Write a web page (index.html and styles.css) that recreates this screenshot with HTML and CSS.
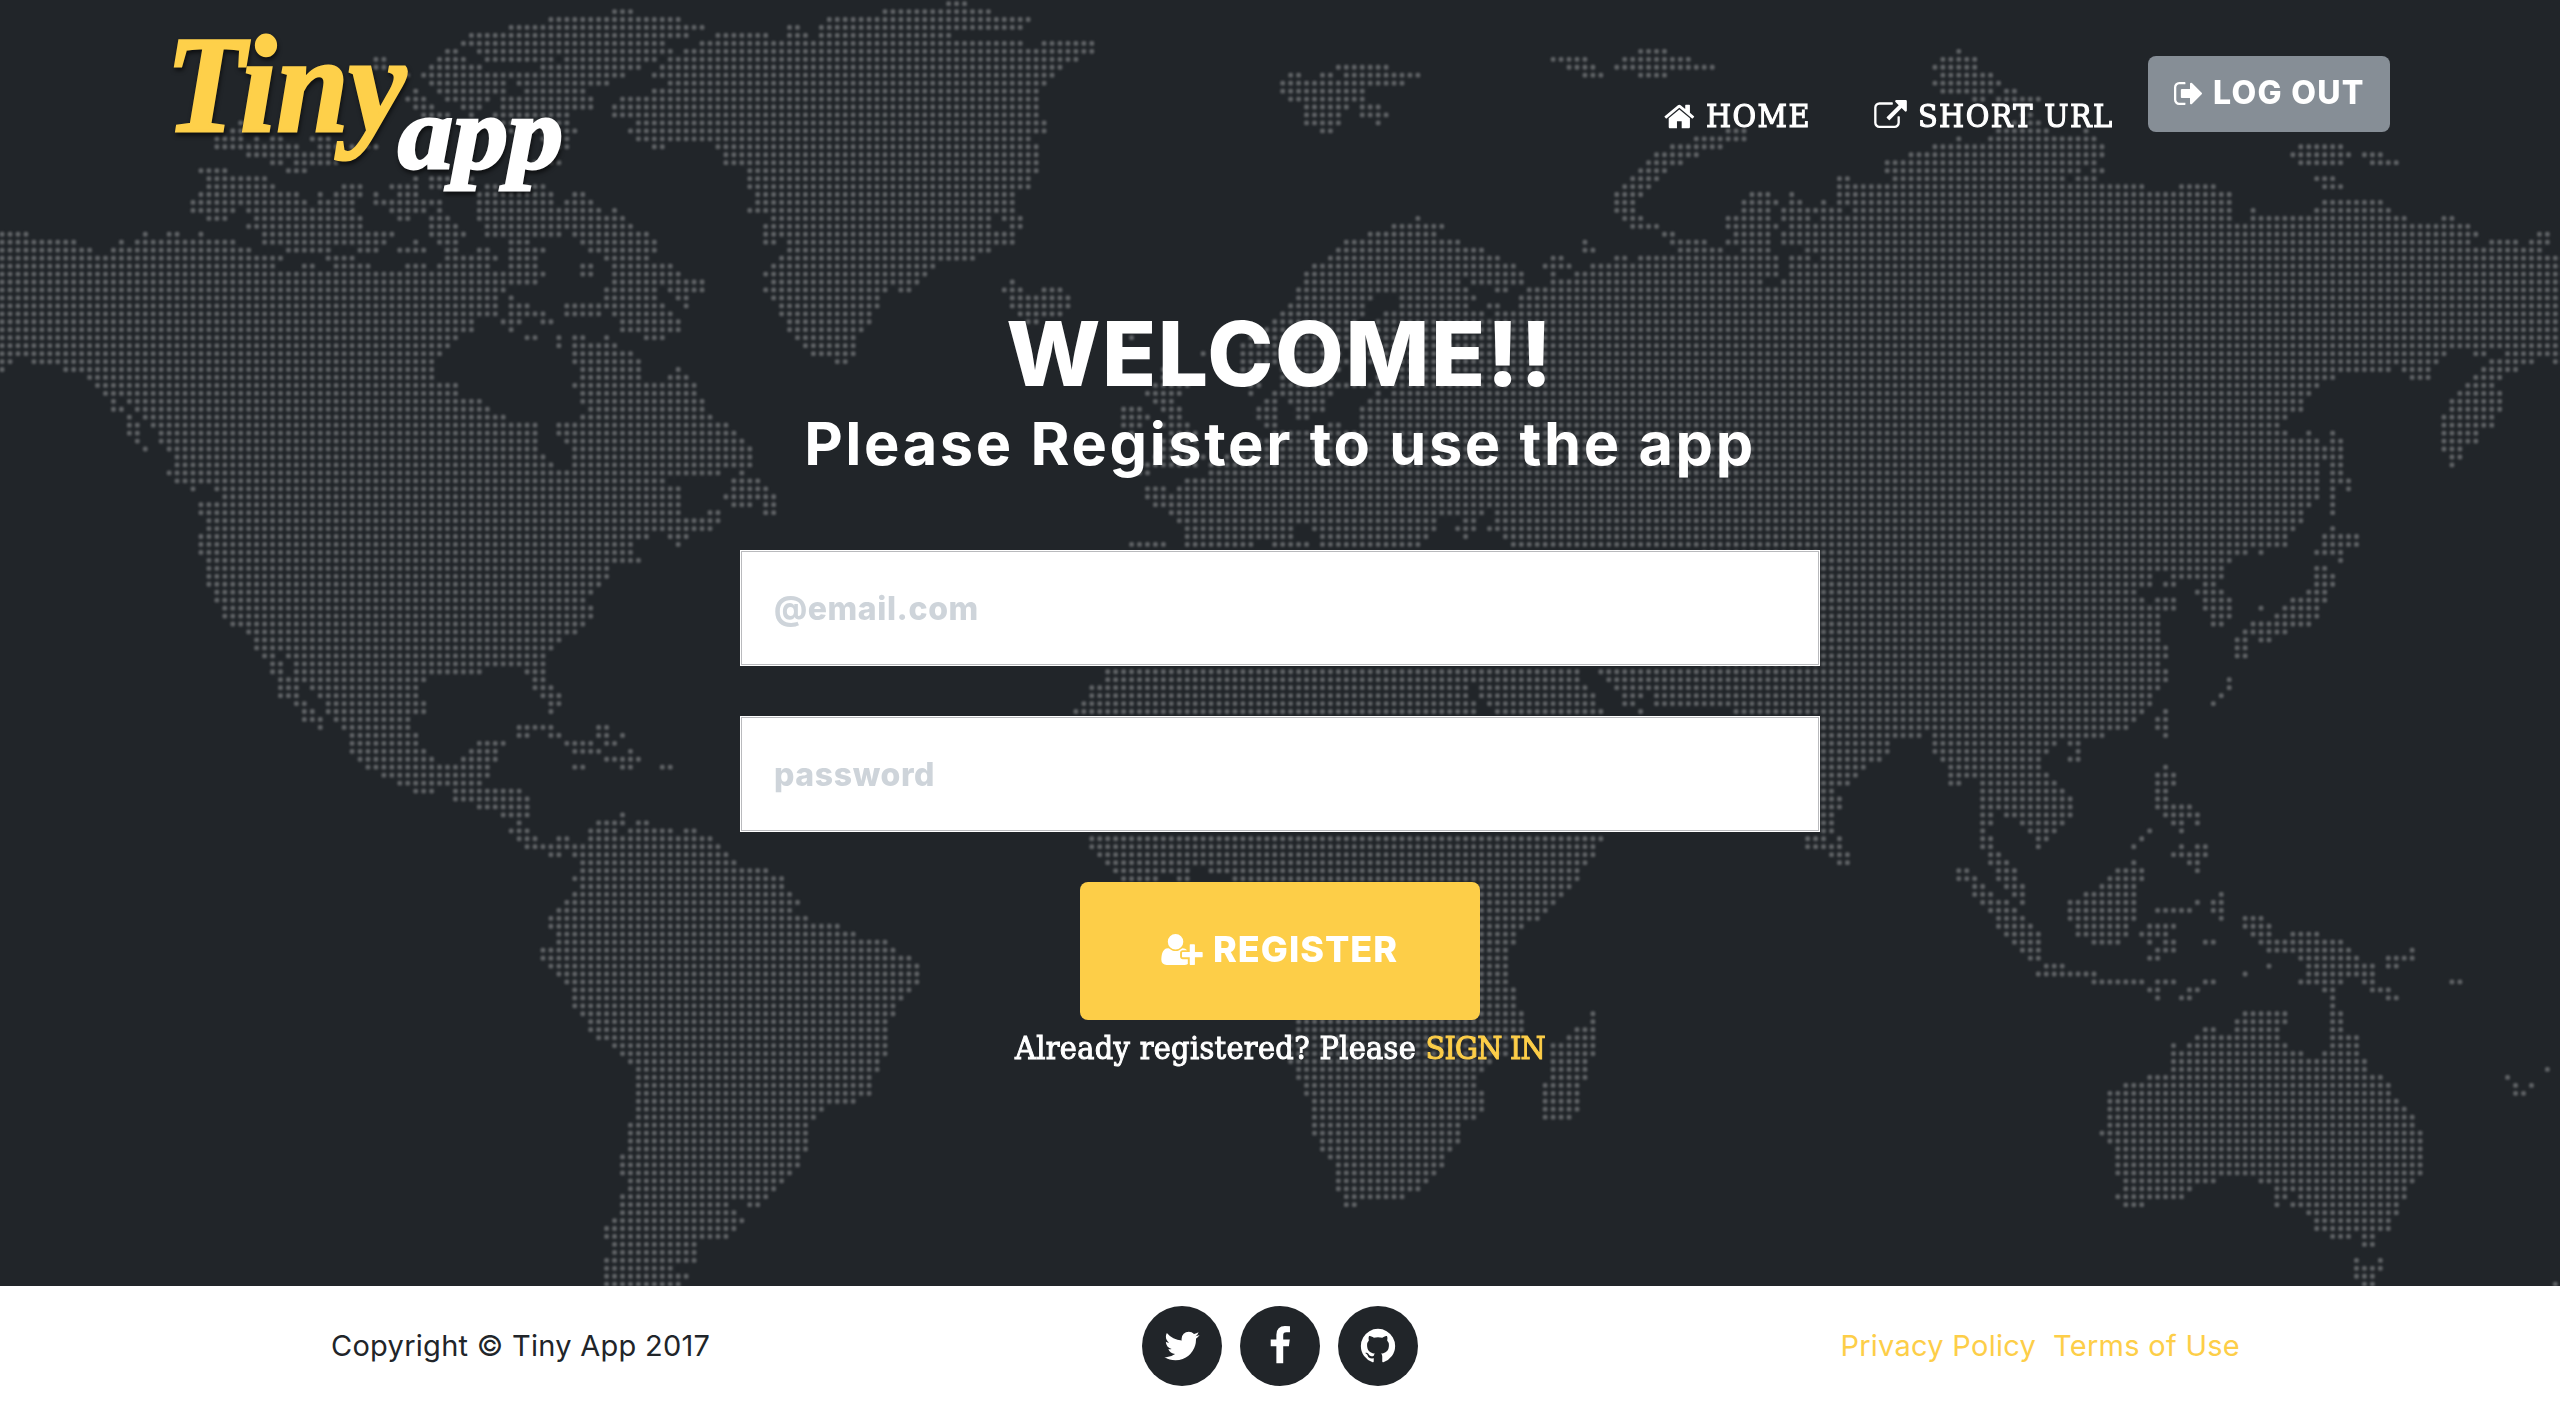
FILE: index.html
```html
<!DOCTYPE html>
<html lang="en">
<head>
<meta charset="utf-8">
<title>Tiny App</title>
<link rel="stylesheet" href="styles.css">
</head>
<body>
<main class="hero">
  <canvas class="world" width="2560" height="1286"></canvas>
  <header class="navbar">
    <svg class="logo" viewBox="0 0 410 190" role="img" aria-label="Tiny app">
      <text class="logo-tiny" x="-2" y="116" textLength="240" lengthAdjust="spacingAndGlyphs">Tiny</text>
      <text class="logo-app" x="230" y="153" textLength="165" lengthAdjust="spacingAndGlyphs">app</text>
    </svg>
    <nav class="links">
      <a class="link link-home"><svg class="icon-home" viewBox="0 0 1792 1792"><path d="M1408 992v480q0 26-19 45t-45 19h-384v-384h-256v384h-384q-26 0-45-19t-19-45v-480q0-1 .5-3t.5-3l575-474 575 474q1 2 1 6zm223-69l-62 74q-8 9-21 11h-3q-13 0-21-7l-692-577-692 577q-12 8-24 7-13-2-21-11l-62-74q-8-10-7-23.5t11-21.5l719-599q32-26 76-26t76 26l244 204v-195q0-14 9-23t23-9h192q14 0 23 9t9 23v408l219 182q10 8 11 21.5t-7 23.5z"/></svg><span class="t-home">HOME</span></a>
      <a class="link link-short"><svg class="icon-ext" viewBox="0 0 1792 1536"><path d="M1408 928v320q0 119-84.5 203.5t-203.5 84.500h-832q-119 0-203.500-84.500t-84.500-203.500v-832q0-119 84.500-203.500t203.500-84.500h704q14 0 23 9t9 23v64q0 14-9 23t-23 9h-704q-66 0-113 47t-47 113v832q0 66 47 113t113 47h832q66 0 113-47t47-113v-320q0-14 9-23t23-9h64q14 0 23 9t9 23zm384-864v512q0 26-19 45t-45 19-45-19l-176-176-652 652q-10 10-23 10t-23-10l-114-114q-10-10-10-23t10-23l652-652-176-176q-19-19-19-45t19-45 45-19h512q26 0 45 19t19 45z"/></svg><span class="t-short">SHORT URL</span></a>
      <button class="btn-logout"><svg class="icon-out" viewBox="64 256 1568 1280"><path d="M704 1440q0 4 1 20t.5 26.500-3 23.500-10 19.500-20.500 6.500h-320q-119 0-203.500-84.500t-84.500-203.500v-704q0-119 84.500-203.500t203.500-84.500h320q13 0 22.500 9.500t9.500 22.500q0 4 1 20t.5 26.500-3 23.500-10 19.500-20.500 6.500h-320q-66 0-113 47t-47 113v704q0 66 47 113t113 47h312l11.500 1 11.500 3 8 5.500 7 9 2 13.500zm928-544q0 26-19 45l-544 544q-19 19-45 19t-45-19-19-45v-288h-448q-26 0-45-19t-19-45v-384q0-26 19-45t45-19h448v-288q0-26 19-45t45-19 45 19l544 544q19 19 19 45z"/></svg><span>LOG OUT</span></button>
    </nav>
  </header>
  <section class="intro">
    <h1 class="title">WELCOME!!</h1>
    <h2 class="subtitle">Please Register to use the app</h2>
    <form class="form">
      <input class="field field-email" type="text" placeholder="@email.com">
      <input class="field field-password" type="text" placeholder="password">
      <button class="btn-register" type="button"><svg class="icon-user" viewBox="0 128 2048 1536"><path d="M704 896q-159 0-271.500-112.500t-112.500-271.500 112.500-271.500 271.500-112.500 271.500 112.500 112.500 271.500-112.500 271.500-271.500 112.500zm960 128h352q13 0 22.500 9.500t9.500 22.500v192q0 13-9.500 22.500t-22.500 9.500h-352v352q0 13-9.500 22.500t-22.500 9.500h-192q-13 0-22.500-9.500t-9.500-22.500v-352h-352q-13 0-22.500-9.500t-9.500-22.500v-192q0-13 9.500-22.500t22.500-9.500h352v-352q0-13 9.500-22.500t22.500-9.500h192q13 0 22.500 9.500t9.500 22.500v352zm-736 224q0 52 38 90t90 38h256v238q-68 50-171 50h-874q-121 0-194-69t-73-190q0-53 3.500-103.500t14-109 26.500-108.500 43-97.500 62-81 85.500-53.500 111.500-20q19 0 39 17 79 61 154.500 91.500t164.500 30.500 164.500-30.500 154.500-91.500q20-17 39-17 132 0 217 96h-223q-52 0-90 38t-38 90v192z"/></svg><span>REGISTER</span></button>
    </form>
    <p class="signin">Already registered? Please <a class="signin-link">SIGN IN</a></p>
  </section>
</main>
<footer class="footer">
  <div class="copyright">Copyright © Tiny App 2017</div>
  <div class="social">
    <a class="bubble"><svg viewBox="0 0 1792 1792"><path d="M1684 408q-67 98-162 167 1 14 1 42 0 130-38 259.500t-115.500 248.500-184.500 210.500-258 146-323 54.500q-271 0-496-145 35 4 78 4 225 0 401-138-105-2-188-64.500t-114-159.500q33 5 61 5 43 0 85-11-112-23-185.500-111.500t-73.500-205.500v-4q68 38 146 41-66-44-105-115t-39-154q0-88 44-163 121 149 294.500 238.500t371.500 99.500q-8-38-8-74 0-134 94.500-228.500t228.500-94.500q140 0 236 102 109-21 205-78-37 115-142 178 93-10 186-50z"/></svg></a>
    <a class="bubble"><svg viewBox="0 0 1792 1792"><path d="M1343 12v264h-157q-86 0-116 36t-30 108v189h293l-39 296h-254v759h-306v-759h-255v-296h255v-218q0-186 104-288.500t277-102.500q147 0 228 12z"/></svg></a>
    <a class="bubble"><svg viewBox="0 0 1792 1792"><path d="M896 128q209 0 385.500 103t279.500 279.500 103 385.500q0 251-146.500 451.500t-378.500 277.500q-27 5-40-7t-13-30q0-3 .5-76.500t.5-134.500q0-97-52-142 57-6 102.500-18t94-39 81-66.500 53-105 20.500-150.500q0-119-79-206 37-91-8-204-28-9-81 11t-92 44l-38 24q-93-26-192-26t-192 26q-16-11-42.500-27t-83.500-38.500-85-13.500q-45 113-8 204-79 87-79 206 0 85 20.500 150t52.500 105 80.500 67 94 39 102.500 18q-39 36-49 103-21 10-45 15t-57 5-65.500-21.500-55.500-62.500q-19-32-48.500-52t-49.500-24l-20-3q-21 0-29 4.500t-5 11.500 9 14 13 12l7 5q22 10 43.500 38t31.500 51l10 23q13 38 44 61.500t67 30 69.500 7 55.500-3.500l23-4q0 38 .5 88.500t.5 54.500q0 18-13 30t-40 7q-232-77-378.500-277.500t-146.500-451.500q0-209 103-385.500t279.500-279.500 385.500-103z"/></svg></a>
  </div>
  <div class="legal"><a>Privacy Policy</a><a>Terms of Use</a></div>
</footer>
<script src="map.js"></script>
</body>
</html>
```
FILE: styles.css
```css
* { box-sizing: border-box; }
body { margin: 0; background: #fff; font-family: Inter, "Open Sans", sans-serif; color: #212529; }
svg { fill: currentColor; flex: none; }
.hero { position: relative; height: 1286px; background: #212529; color: #fff; overflow: hidden; }
.world { position: absolute; inset: 0; display: block; }
.navbar { position: relative; display: flex; justify-content: space-between; align-items: flex-start; height: 300px; padding: 15px 170px 0 168px; }
.logo { width: 410px; height: 190px; overflow: visible; font-family: "Liberation Serif", serif; font-style: italic; font-weight: 700; filter: drop-shadow(1px 3px 2px rgba(0,0,0,.6)); }
.logo-tiny { font-size: 138px; fill: #fed04a; stroke: #fed04a; stroke-width: 3px; }
.logo-app { font-size: 104px; fill: #fff; stroke: #fff; stroke-width: 3px; }
.links { display: flex; align-items: flex-start; padding-top: 41px; }
.link { display: flex; align-items: center; height: 40px; margin-top: 40px; font-family: "DejaVu Serif Condensed", "DejaVu Serif", serif; font-size: 32px; line-height: 40px; white-space: nowrap; -webkit-text-stroke: 1.1px #fff; }
.link svg { -webkit-text-stroke: 0; }
.link-home { width: 210px; }
.link-short { width: 274px; }
.icon-home { width: 33px; height: 33px; margin: 0 9px 0 0; }
.icon-ext { width: 33px; height: 28px; margin: -4px 11px 0 0; }
.t-home { letter-spacing: 1.4px; }
.t-short { letter-spacing: 1.4px; }
.btn-logout { display: flex; align-items: center; width: 242px; height: 76px; padding: 0 0 2px 26px; border: 0; border-radius: 8px; background: #868e96; color: #fff; font: 800 32px/40px Inter, sans-serif; letter-spacing: 1.3px; white-space: nowrap; }
.icon-out { width: 28px; height: 23px; margin-right: 11px; }
.intro { position: relative; display: flex; flex-direction: column; align-items: center; }
.title { margin: 0; height: 110px; font-size: 89px; line-height: 108px; font-weight: 800; letter-spacing: 1.6px; }
.subtitle { margin: 0; height: 80px; font-size: 59.5px; line-height: 66px; font-weight: 700; letter-spacing: 2.6px; white-space: nowrap; }
.form { display: flex; flex-direction: column; align-items: center; margin-top: 60px; }
.field { width: 1080px; height: 116px; margin: 0 0 50px; padding: 0 33px; border: 1px solid #fff; box-shadow: inset 0 0 0 1px #b9babd; border-radius: 0; background: #fff; font: 800 32px Inter, sans-serif; letter-spacing: .6px; }
.field::placeholder { color: #ced4da; opacity: 1; }
.btn-register { display: flex; align-items: center; width: 400px; height: 138px; padding: 0 0 4px 81px; border: 0; border-radius: 8px; background: #fdce48; color: #fff; font: 800 36px/40px Inter, sans-serif; letter-spacing: 1px; white-space: nowrap; }
.icon-user { width: 42px; height: 31px; margin-right: 10px; }
.signin { margin: 4px 0 0; font-family: "DejaVu Serif Condensed", "DejaVu Serif", serif; font-size: 32px; line-height: 48px; letter-spacing: .35px; white-space: nowrap; -webkit-text-stroke: 1px currentColor; }
.signin-link { color: #fdce48; letter-spacing: -.8px; }
.footer { display: grid; grid-template-columns: 1fr auto 1fr; align-items: center; height: 120px; font-size: 29px; line-height: 40px; letter-spacing: .27px; background: #fff; }
.copyright { padding-left: 331px; white-space: nowrap; }
.social { display: flex; gap: 18px; }
.bubble { display: flex; align-items: center; justify-content: center; width: 80px; height: 80px; border-radius: 50%; background: #212529; color: #fff; }
.bubble svg { width: 40px; height: 40px; }
.legal { display: flex; justify-content: flex-end; gap: 17px; padding-right: 320px; color: #fdce48; white-space: nowrap; }
```
FILE: map.js
```js
// Dotted world map. Each sheet has its own origin and scale; rows are
// "y x0 x1 [x0 x1 ...]" runs of land, outline is a closed land polygon.
const PITCH = 7.954, X0 = 2.1, Y0 = 3.6;
const sheets = [
  { ox: 0, oy: 0, sx: 1.8233, sy: 2.24,
    outline: "-10,516 54,516 54,534 142,534 142,552 170,552 172,570 200,570 202,552 215,552 215,534 228,534 228,552 245,552 245,534 258,534 258,516 272,516 272,534 302,534 302,516 330,516 330,534 360,534 360,516 374,516 374,534 432,534 432,552 460,552 462,570 518,570 518,588 506,588 506,606 548,606 548,588 578,588 578,606 604,606 604,588 678,588 678,606 736,606 736,588 782,588 782,606 796,606 796,588 808,588 808,552 832,552 832,570 866,570 866,552 896,552 896,570 910,570 910,588 896,588 896,606 924,606 924,534 968,534 968,552 996,552 996,568 982,570 982,606 996,606 996,622 982,624 982,640 924,640 924,658 910,658 910,712 868,712 868,748 838,748 838,766 824,766 824,784 808,784 808,802 794,802 794,855 838,855 838,890 880,890 880,908 896,908 896,926 924,926 924,944 982,944 982,1014 996,1014 996,1032 1010,1032 1010,1050 1040,1050 1040,1000 1028,1000 1028,980 1014,980 1014,944 1056,944 1056,926 1072,926 1072,908 1056,908 1056,872 1044,872 1044,855 1058,836 1058,816 1044,816 1044,750 1070,750 1070,766 1098,766 1098,750 1112,750 1112,766 1128,766 1128,784 1158,784 1158,800 1170,800 1170,855 1214,855 1214,836 1230,836 1230,820 1244,820 1244,836 1258,836 1258,855 1272,855 1272,890 1288,890 1288,926 1300,926 1300,944 1330,944 1330,962 1345,962 1345,980 1360,980 1360,998 1374,998 1374,1050 1316,1052 1316,1068 1216,1068 1216,1086 1244,1086 1244,1158 1288,1158 1288,1140 1316,1140 1316,1176 1302,1176 1302,1192 1258,1192 1258,1210 1244,1210 1244,1228 1230,1228 1230,1210 1214,1210 1214,1194 1186,1194 1186,1210 1158,1210 1158,1246 1172,1246 1172,1264 1114,1264 1114,1300 1100,1300 1100,1318 1086,1318 1086,1334 1070,1334 1070,1352 1084,1352 1084,1388 1070,1388 1070,1406 1056,1406 1056,1424 1026,1424 1026,1442 1010,1442 1010,1460 996,1460 996,1514 956,1514 956,1496 880,1496 880,1514 535,1514 535,1478 518,1478 518,1462 500,1462 500,1478 476,1478 476,1460 462,1460 462,1426 448,1424 448,1406 418,1406 418,1388 404,1388 404,1352 390,1352 390,1318 375,1318 375,1246 360,1246 360,1194 375,1194 375,1158 360,1158 360,1122 404,1122 404,1104 390,1104 375,1086 360,1086 360,1104 346,1104 346,1086 317,1086 317,1068 303,1068 303,1050 317,1050 317,1014 303,1014 303,998 288,998 288,962 273,962 273,944 244,926 244,908 230,908 230,890 186,890 186,872 172,872 172,855 158,855 158,836 114,836 114,818 56,818 56,802 28,802 28,818 10,818 10,836 -10,836",
    rows: `26 1115 1156;44 1000 1243 1506 1580;62 927 1286 1435 1460 1492 1580;79 855 1258 1302 1402 1435 1475 1492 1580
97 840 1215 1273 1580;115 812 838 868 1230 1244 1580;133 680 706 795 852 882 1012 1026 1200 1214 1580;151 680 706 780 880 985 1172 1200 1580
169 724 750 766 1142 1186 1580;187 780 925 940 1114 1214 1580;205 752 766 795 925 955 1070 1186 1580;222 738 780 810 895 910 1084 1128 1580
240 752 795 840 880 910 1084 1114 1580;258 768 822 855 866 895 1040 1114 1580;276 435 450 855 866 900 1040 1158 1580;294 418 445 895 1055 1142 1580
312 390 445 460 475 490 518 562 605 985 1040 1158 1580;330 390 547 576 620 640 690 1000 1040 1186 1214 1302 1580;347 447 605 1316 1580
365 490 518 533 620 970 1020 1316 1580;383 360 415 520 562 1360 1580;400 375 490 752 766 782 866 1360 1580;418 375 504 620 663 710 770 780 866 880 996 1360 1580
436 360 547 578 592 606 663 680 692 724 766 868 1010 1040 1070 1374 1580;454 346 562 578 650 680 810 868 1012 1026 1084 1374 1580
472 346 430 447 650 710 780 795 808 868 1100 1114 1128 1360 1580;490 375 415 462 663 724 750 780 824 868 1142 1402 1580
507 447 663 780 838 882 1158 1388 1580;525 477 720 780 852 882 1026 1040 1186 1388 1580;543 477 706 752 766 795 838 1056 1200 1388 1416 1430 1580
561 520 605 650 692 724 780 1070 1200 1430 1580;579 592 648 1100 1186 1416 1580;597 1056 1084 1114 1230 1402 1580;615 1056 1084 1114 1244 1388 1580
633 1114 1286 1402 1580;650 1100 1200 1214 1286 1388 1580;668 924 940 1100 1200 1230 1258 1402 1580;686 924 968 1026 1214 1244 1258 1416 1580
704 924 996 1026 1098 1114 1230 1416 1580;722 910 955 982 1010 1128 1244 1430 1580;740 924 940 1128 1244 1430 1580;758 955 982 1014 1024 1172 1214 1445 1562;776 1014 1024 1460 1562
793 1478 1562;811 1520 1550;900 200 214;918 200 228;936 228 244 258 272;954 228 258;972 228 258;990 244 258;1007 258 272
1060 1345 1360;1078 1330 1388;1095 1330 1402;1113 1316 1416;1131 1330 1374 1388 1416;1149 1388 1416
1488 490 516;1506 490 516;1524 506 547 550 780 970 996;1541 506 547 562 765 970 1010;1559 506 547 576 765 985 1024` },
  { ox: 860, oy: 0, sx: 1.8233, sy: 2.8,
    rows: `8 155 198;32 40 240;55 -5 313;77 -5 298;100 -5 168;122 -5 298 330 428;145 -5 428 1418 1472;167 -5 400 1258 1330 1388 1516
189 -5 370 868 966 1288 1342 1375 1560;211 -5 355 780 806 838 864 880 1024 1316 1358 1418 1472;233 -5 342 766 996;256 -5 327 766 922;278 -5 327 780 922
300 -5 327 810 894 910 952;322 -5 327 810 880 910 966;345 -5 342 810 880 938 952;367 -5 342 838 864;390 -5 313 1520 1580;412 -5 327 1476 1580
434 -5 327 1446 1532;456 -5 327 1432 1502;479 -5 327 1418 1472;501 -5 313 1402 1458;523 -5 313 1388 1444;545 -5 284 1374 1430;568 -5 284 1374 1415
590 -5 284 1374 1415;612 -5 240 258 298 1012 1024 1388 1430;634 -5 240 272 298 966 1068 1402 1458;657 -5 284 924 1054 1460 1488
679 -5 284 880 1096 1316 1328 1476 1546;701 -5 240 866 1140 1316 1342 1490 1580;724 -5 211 852 1170 1258 1285 1374 1400 1418 1580
746 -5 140 824 1198 1244 1300 1330 1580;768 -5 124 810 1212 1258 1270 1302 1580;790 -5 110 272 284 810 1096 1112 1212 1258 1580
813 -5 52 68 96 258 298 330 370 795 1112 1156 1184 1214 1580;835 -5 38 272 386 795 938 982 1126 1200 1580;857 -5 38 272 386 780 922 982 1112 1142 1170 1200 1580
880 -5 22 286 370 766 922 955 1142 1156 1580;902 -5 22 300 327 752 908 938 1580;926 -5 8 738 910 925 1580;948 486 500 700 900 925 1580
970 695 895 910 1580;992 620 630 695 880 895 1580;1014 695 890 920 1580;1036 548 570 695 740 765 880 950 1580;1058 540 600 695 740 765 870 940 1580
1080 530 600 700 730 765 1580;1102 518 590 708 720 750 864 938 952 966 1580;1124 533 575 738 764 780 852 922 1580;1147 476 516 548 590 722 764 795 852 910 1580
1169 476 530 560 590 722 764 795 822 910 1580;1191 476 516 548 605 735 764 850 880 910 1580;1213 490 505 560 620 750 1580;1236 548 620 720 1580
1258 540 620 690 1580;1280 530 630 665 1580;1302 520 620 640 1580;1325 505 530 635 1580;1347 590 1580;1370 518 562 576 1580;1392 518 1580;1414 533 1580
1437 562 1140 1156 1580;1459 576 1054 1098 1126 1156 1580;1481 590 795 822 1054 1084 1126 1142 1580;1504 590 795 838 1038 1098 1112 1170 1580
1526 490 560 590 720 750 822 838 1024 1186 1580` },
  { ox: 1700, oy: 0, sx: 1.8233, sy: 2.24,
    outline: "-10,642 1580,642 1580,784 -10,784",
    rows: `115 466 478;133 437 507;151 0 28 422 507;169 437 536;187 422 550;205 437 536 550 580;222 495 525 540 624;240 560 610;258 575 610;276 560 624
294 45 88 540 636 697 710;312 0 88 466 478 525 725;330 0 44 422 740 1088 1174;347 380 740 1074 1188 1204 1246;365 336 725 1088 1174 1220 1276
383 336 696 710 740;400 248 274 348 668 682 725 1118 1160;418 248 812 872 942 1132 1174;436 88 130 160 174 248 972;454 74 145 160 188 220 232 248 972 1132 1246
472 74 130 147 260 276 972 1002 1016 1118 1260;490 45 130 147 204 220 972 1002 1290 1350 1378;507 45 145 160 1406;525 60 130 147 1420 1524 1552
543 0 14 45 130 147 1406 1436 1494 1510 1552;561 0 44 74 130 190 1538;579 0 145 160 204 220 1580;597 0 145 160 1580;615 0 145 160 1580;633 0 116 147 1580
793 0 1362 1406 1436 1465 1580;811 0 1348 1436 1524 1552 1580;829 0 1262 1276 1334 1420 1494;847 0 1160 1290 1334 1406 1465;865 0 1130 1392 1450
883 0 1116 1378 1465;900 0 1102 1364 1465;918 0 1102 1364 1465;936 0 1072 1350 1450;954 0 1058 1350 1450;972 0 1072 1102 1116 1147 1160 1350 1420
990 0 1130 1147 1174 1350 1420;1007 0 1174 1350 1392;1025 0 1130 1132 1174 1364 1392;1042 0 1130 1147 1174 1364 1378;1060 0 1130 1147 1174
1078 0 1130 1147 1188;1095 0 1130 1147 1160 1174 1188;1113 0 1130 1147 1160;1131 0 1116 1147 1160;1149 0 1102 1147 1160;1167 0 1102;1185 0 1088 1147 1160
1203 0 1072 1132 1204;1220 0 1072 1132 1204;1238 0 1000 1016 1028 1118 1174;1256 0 972 1160 1174;1274 0 957 1118 1145;1292 0 825 857 957 1118 1160
1310 0 825 842 870 914 942 1118 1160;1327 0 800 900 957 1102 1145;1345 0 812 828 870 914 972 1074 1145;1363 0 870 914 972 1016 1028 1058 1130
1381 0 842 928 972 1045 1130;1399 0 842 928 957 1000 1116;1417 0 842 986 1072;1434 0 842 972 1000 1016 1045;1452 0 855 972 1000;1470 0 855 972 1000
1488 0 842;1506 0 855;1524 0 855 958 972;1541 0 842 958 972;1559 0 828 944 957` },
  { ox: 300, oy: 600, sx: 1.96, sy: 2.24,
    rows: `18 0 576;36 0 576;54 0 560;72 0 546;90 0 515;108 0 498;126 0 484;144 0 484;161 0 358 438 484;179 0 248 454 484;197 18 234 454 498
215 34 234 470 515;232 -18 14 50 248 485 515;250 -4 30 50 248 485 498;268 -4 46 65 218;286 34 46 80 218 423 498 578 608;304 96 234 423 450 485 515 578 608 625 640
322 96 234 345 405 516 576 594 624;340 96 248 330 390 532 592 640 655;358 110 265 314 390 594 670;376 126 374 532 560 625 655 704 732;394 158 374;411 188 358
429 220 265 298 436;447 298 450;465 345 450;483 392 450 625 640;500 423 436 578 640 656 686;518 408 450 562 624 640 732 750 778;536 423 466 500 530 562 810
554 438 826;572 485 515 532 842;590 548 858;607 548 920;625 532 950;643 548 950;661 532 966;679 516 982;696 500 966;714 485 998;732 485 1060;750 500 1092
768 500 1154;786 470 1168;804 470 1200;821 485 1215;839 500 1215;857 516 1215;875 532 1200;893 532 1185;910 532 1168;928 548 1168;946 562 1154;964 562 1154
982 578 1154;1000 610 1154;1018 625 1154;1035 640 1138;1053 656 1138;1071 656 1122;1089 656 1122;1107 656 1122;1125 656 1092;1142 656 1028;1160 656 1012
1178 640 998;1196 640 998;1214 640 998;1232 640 998;1250 625 982;1268 625 982;1285 625 966;1303 640 950;1321 640 934;1339 625 920;1357 625 842 876 904
1375 625 858;1392 610 872;1410 594 858;1428 594 842;1446 610 778;1464 610 778;1482 594 778;1499 594 732;1517 594 764;1534 594 748` },
  { ox: 1060, oy: 640, sx: 2.0632, sy: 2.529,
    rows: `80 92 1076 1110 1580;100 92 1076 1126 1580;121 60 845 862 1090 1142 1580;141 60 845 862 1108 1158 1206 1222 1580;161 42 860 878 1108 1158 1190 1222 1580
182 26 860 895 1124 1190 1206 1388 1580;502 60 1124 1536 1580;523 60 1108 1536 1580;543 75 1108;563 92 1090;583 108 270 304 1076;604 124 206 240 270 354 1076
624 400 1058;644 400 1042;664 400 1026;684 400 1010;705 400 994;725 400 960;745 400 944;765 400 944;785 400 928;805 400 928;825 400 928;846 400 928;866 400 928
886 400 944;906 400 944;926 400 944;946 486 960 1092 1108;966 486 960 1092 1108;987 486 960 1060 1108;1007 470 944 1042 1108;1027 470 930 1010 1108
1047 470 928 1010 1108;1067 470 895 1010 1090;1088 486 878 1010 1090;1108 486 862 1010 1090;1128 502 862 994 1076;1148 502 878 994 1076;1168 518 878 994 1076
1188 518 878 994 1076;1209 518 862 994 1060;1229 518 828;1249 518 828;1269 535 828;1289 535 812;1309 551 796;1330 567 796;1350 567 780;1370 567 764
1390 567 747;1410 584 715;1430 584 616` },
  { ox: 1760, oy: 640, sx: 1.96, sy: 2.3758,
    rows: `76 0 802;95 0 802 912 926;114 0 788 912 926;133 0 770 898 910;152 0 770 882 896;171 0 756 788 802;190 118 740 774 802;209 118 724 774 802
228 118 320 336 678 788 802;247 118 258 336 584 602 630;266 118 258 336 568 616 630;285 118 242 352 552 602 630;304 118 210 368 552 788 802
323 118 194 368 568 774 818;341 118 178 368 398 430 584 774 818;360 118 148 430 600 774 802;379 118 162 430 615 774 802;398 118 162 430 615 774 850
417 118 148 430 460 476 615 788 865;436 118 148 430 460 508 600 804 834 850 865;455 118 148 430 444 523 584 758 772 820 834;473 88 132 150 162 430 460 540 568 743 756
492 88 116 134 162 430 460 540 554 727 740 820 834 850 880;511 134 178 446 475 804 880;530 150 178 446 490 727 740 835 865;549 384 414 460 506 696 756 850 865
568 384 428 460 506 680 756;587 414 444 476 522 665 740;606 414 460 492 522 634 740 898 912;625 430 490 508 522 602 740 850 865 882 912
643 446 506 602 740 774 850 882 912;662 460 522 602 740 898 912 945 990;681 460 538 616 724 758 818 945 1005;700 476 552 616 724 743 802 960 1005 1038 1098
719 492 552 648 710 758 772 788 818 866 896 976 1145;738 508 552 774 818 992 1160 1270 1285;757 523 552 758 788 1054 1176 1225 1285
776 554 600 992 1005 1070 1208 1225 1254;795 540 662 945 958 1070 1208;814 648 756 774 818 866 896 1054 1145 1178 1208 1350 1380
833 758 788 835 865 1100 1130 1194 1240;852 774 788 820 850 1116 1130 1225 1254;871 1116 1130;889 945 1036 1116 1145;908 930 1036 1116 1145
927 866 896 930 1020 1116 1145;946 850 1020 1116 1176;965 804 818 835 1036 1116 1176;984 804 1067 1100 1176;1003 804 1192;1021 804 1192 1536 1550
1040 758 1223 1458 1472;1059 710 1238 1474 1488 1505 1520;1078 680 1238 1474 1504;1097 680 1254;1115 680 1270;1134 680 1285;1153 680 1285;1172 665 1300
1191 680 1300;1210 695 1300;1229 695 1300;1248 695 1300;1267 695 1300;1286 710 896 976 1285;1305 710 850 1005 1270;1324 695 834 1005 1036 1054 1270
1343 710 756 1005 1020 1038 1254;1362 1070 1254;1381 1085 1238;1400 1085 1238;1419 1116 1160 1178 1208;1438 1178 1208;1475 1163 1176 1210 1223
1494 1163 1223;1513 1163 1208;1532 1178 1208 1552 1568` }
];

const ctx = document.querySelector(".world").getContext("2d");
const dots = new Set();
const COLS = 322, ROWS = 162;
for (const s of sheets) {
  for (const line of s.rows.split(/[;\n]/)) {
    const [y, ...xs] = line.trim().split(/\s+/).map(Number);
    const r = Math.round((y / s.sy + s.oy - Y0) / PITCH);
    for (let i = 0; i + 1 < xs.length; i += 2) {
      const a = Math.ceil((xs[i] / s.sx + s.ox - X0) / PITCH);
      const b = Math.floor((xs[i + 1] / s.sx + s.ox - X0) / PITCH);
      for (let c = a; c <= b; c++) dots.add(r * 1000 + c);
    }
  }
  if (s.outline) {
    const path = new Path2D("M" + s.outline.replace(/ /g, "L") + "Z");
    for (let r = 0; r < ROWS; r++)
      for (let c = 0; c < COLS; c++)
        if (ctx.isPointInPath(path, (X0 + c * PITCH - s.ox) * s.sx, (Y0 + r * PITCH - s.oy) * s.sy))
          dots.add(r * 1000 + c);
  }
}
ctx.filter = "blur(0.8px)";
ctx.fillStyle = "#5f6265";
ctx.beginPath();
for (const d of dots) {
  const x = X0 + (d % 1000) * PITCH, y = Y0 + Math.floor(d / 1000) * PITCH;
  ctx.roundRect(x - 2.4, y - 2.4, 4.8, 4.8, 1.6);
}
ctx.fill();
```
